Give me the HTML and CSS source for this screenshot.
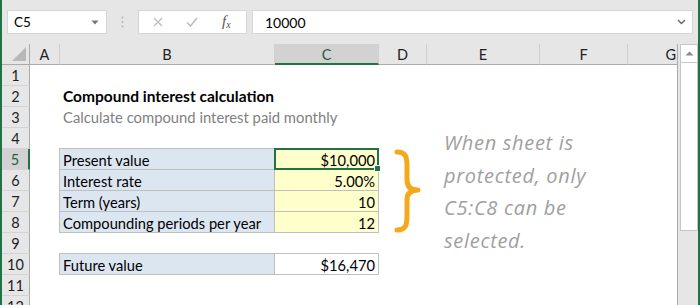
FILE: index.html
```html
<!DOCTYPE html>
<html>
<head>
<meta charset="utf-8">
<link rel="stylesheet" href="styles.css">
</head>
<body>
<div class="app">
  <div class="toolbar">
    <div class="namebox">
      <span class="nb-text">C5</span>
      <svg class="nb-arrow" width="8" height="5" viewBox="0 0 8 5"><path d="M0.5 0.5 L7.5 0.5 L4 4.5 Z" fill="#777"/></svg>
    </div>
    <div class="grip">
      <svg width="3" height="12" viewBox="0 0 3 12"><circle cx="1.5" cy="1.5" r="1" fill="#b5b5b5"/><circle cx="1.5" cy="6" r="1" fill="#b5b5b5"/><circle cx="1.5" cy="10.5" r="1" fill="#b5b5b5"/></svg>
    </div>
    <div class="fbtns">
      <svg class="ic-x" width="10" height="10" viewBox="0 0 10 10"><path d="M1 1 L9 9 M9 1 L1 9" stroke="#bdbdbd" stroke-width="1.3" fill="none"/></svg>
      <svg class="ic-check" width="12" height="10" viewBox="0 0 12 10"><path d="M1 5.5 L4.5 9 L11 1" stroke="#bdbdbd" stroke-width="1.5" fill="none"/></svg>
      <span class="ic-fx">f<sub>x</sub></span>
    </div>
    <div class="fbar">
      <span class="fb-text">10000</span>
      <svg class="fb-chev" width="9" height="6" viewBox="0 0 9 6"><path d="M1 1 L4.5 4.5 L8 1" stroke="#666" stroke-width="1.4" fill="none"/></svg>
    </div>
  </div>
  <div class="main">
    <div class="sheet">
      <div class="corner"><svg width="14" height="14" viewBox="0 0 14 14"><path d="M14 0 L14 14 L0 14 Z" fill="#b8b8b8"/></svg></div>
      <div class="ch">A</div>
      <div class="ch">B</div>
      <div class="ch sel">C</div>
      <div class="ch">D</div>
      <div class="ch">E</div>
      <div class="ch">F</div>
      <div class="ch last">G</div>

      <div class="rh r1">1</div>
      <div class="rh r2">2</div>
      <div class="rh r3">3</div>
      <div class="rh r4">4</div>
      <div class="rh r5 sel">5</div>
      <div class="rh r6">6</div>
      <div class="rh r7">7</div>
      <div class="rh r8">8</div>
      <div class="rh r9">9</div>
      <div class="rh r10">10</div>
      <div class="rh r11">11</div>
      <div class="rh r12">12</div>

      <div class="title">Compound interest calculation</div>
      <div class="subtitle">Calculate compound interest paid monthly</div>

      <div class="tbl inputs">
        <div class="lbl">Present value</div><div class="val input active">$10,000</div>
        <div class="lbl">Interest rate</div><div class="val input">5.00%</div>
        <div class="lbl">Term (years)</div><div class="val input">10</div>
        <div class="lbl">Compounding periods per year</div><div class="val input">12</div>
      </div>

      <div class="tbl result">
        <div class="lbl">Future value</div><div class="val">$16,470</div>
      </div>

      <div class="brace">
        <svg width="28" height="84" viewBox="0 0 28 84"><path d="M3 3 C12 3 13 8 13 18 L13 31 C13 38 17 41 24 41 C17 41 13 44 13 51 L13 66 C13 76 12 81 3 81" stroke="#f5a81c" stroke-width="5" fill="none" stroke-linecap="round" stroke-linejoin="round"/></svg>
      </div>

      <div class="note">When sheet is<br>protected, only<br>C5:C8 can be<br>selected.</div>
    </div>
    <div class="vscroll">
      <div class="vs-up"><svg width="9" height="5" viewBox="0 0 9 5"><path d="M0.5 4.5 L4.5 0.5 L8.5 4.5 Z" fill="#8a8a8a"/></svg></div>
      <div class="vs-thumb"></div>
    </div>
  </div>
</div>
</body>
</html>
```

FILE: styles.css
```css
* { box-sizing: border-box; }
html, body { margin: 0; padding: 0; }
body {
  width: 700px;
  height: 305px;
  overflow: hidden;
  background: #fff;
  font-family: Lato, "Liberation Sans", sans-serif;
  color: #000;
}
.app {
  width: 700px;
  height: 305px;
  border-left: 2px solid #217346;
  border-right: 2px solid #217346;
  display: flex;
  flex-direction: column;
}
.toolbar {
  height: 44px;
  background: #e6e6e6;
  display: flex;
  align-items: flex-start;
  padding: 10px 0 0 5px;
  flex: none;
}
.namebox {
  width: 100px;
  height: 24px;
  background: #fff;
  border: 1px solid #d6d6d6;
  display: flex;
  align-items: center;
  justify-content: space-between;
  padding: 0 7px 0 6px;
  font-size: 13.5px;
}
.nb-arrow { margin-top: 1px; }
.grip {
  width: 31px;
  height: 24px;
  display: flex;
  align-items: center;
  justify-content: center;
}
.fbtns {
  width: 109px;
  height: 24px;
  background: #fff;
  border: 1px solid #d6d6d6;
  display: flex;
  align-items: center;
  padding-left: 14px;
}
.ic-x { margin-right: 23px; }
.ic-check { margin-right: 24px; }
.ic-fx {
  font-family: "Liberation Serif", serif;
  font-style: italic;
  font-size: 15px;
  color: #555;
  line-height: 1;
}
.ic-fx sub { font-size: 10px; vertical-align: -2px; }
.fbar {
  margin-left: 5px;
  width: 441px;
  height: 24px;
  background: #fff;
  border: 1px solid #d6d6d6;
  display: flex;
  align-items: center;
  justify-content: space-between;
  padding: 0 6px 0 12px;
  font-size: 14px;
}
.main {
  flex: 1;
  display: flex;
  min-height: 0;
}
.sheet {
  width: 676px;
  flex: none;
  display: grid;
  grid-template-columns: 28px 30px 215px 104px 48px 113px 88px 50px;
  grid-template-rows: repeat(13, 21px);
  background: #fff;
  border-right: 1px solid #ababab;
  font-size: 14.7px;
  overflow: hidden;
}
.corner {
  background: #e6e6e6;
  border-right: 1px solid #ababab;
  border-bottom: 1px solid #ababab;
  display: flex;
  align-items: flex-end;
  justify-content: flex-end;
  padding: 0 3px 3px 0;
}
.ch {
  background: #e6e6e6;
  border-bottom: 1px solid #ababab;
  border-right: 1px solid #d0d0d0;
  display: flex;
  align-items: center;
  justify-content: center;
  font-size: 14.5px;
  color: #222;
  padding-top: 1px;
}
.ch.last { justify-content: flex-end; padding-right: 2px; border-right: none; }
.ch.sel {
  background: #d2d2d2;
  border-bottom: 2px solid #217346;
  color: #2a5e42;
}
.rh {
  grid-column: 1;
  background: #e6e6e6;
  border-right: 1px solid #ababab;
  border-bottom: 1px solid #d4d4d4;
  display: flex;
  align-items: center;
  justify-content: center;
  font-size: 14.5px;
  color: #222;
  padding-top: 1px;
}
.rh.sel {
  background: #d2d2d2;
  border-right: 2px solid #217346;
  color: #2a5e42;
}
.r1 { grid-row: 2; }
.r2 { grid-row: 3; }
.r3 { grid-row: 4; }
.r4 { grid-row: 5; }
.r5 { grid-row: 6; }
.r6 { grid-row: 7; }
.r7 { grid-row: 8; }
.r8 { grid-row: 9; }
.r9 { grid-row: 10; }
.r10 { grid-row: 11; }
.r11 { grid-row: 12; }
.r12 { grid-row: 13; }

.title {
  grid-column: 3 / 6;
  grid-row: 3;
  font-weight: 700;
  font-size: 15.5px;
  display: flex;
  align-items: flex-end;
  padding: 0 0 2px 3px;
  white-space: nowrap;
}
.subtitle {
  grid-column: 3 / 6;
  grid-row: 4;
  color: #7f7f7f;
  font-size: 14.8px;
  display: flex;
  align-items: flex-end;
  padding: 0 0 2px 3px;
  white-space: nowrap;
}
.tbl {
  grid-column: 3 / 5;
  display: grid;
  grid-template-columns: 215px 104px;
  grid-auto-rows: 21px;
  margin: -1px 0 0 -1px;
  border-top: 1px solid #bfbfbf;
  border-left: 1px solid #bfbfbf;
}
.inputs { grid-row: 6 / 10; grid-template-rows: repeat(4, 21px); }
.result { grid-row: 11; }
.tbl > div {
  border-right: 1px solid #bfbfbf;
  border-bottom: 1px solid #bfbfbf;
  display: flex;
  align-items: flex-end;
  padding-bottom: 0;
  font-size: 14.7px;
  white-space: nowrap;
}
.lbl { background: #dce6f1; padding-left: 3px; }
.val { justify-content: flex-end; padding-right: 3px; background: #fff; }
.val.input { background: #ffffcc; }
.val.active { position: relative; }
.val.active::after {
  content: "";
  position: absolute;
  left: -1px;
  top: -1px;
  right: -1px;
  bottom: -1px;
  border: 2px solid #217346;
}
.val.active::before {
  content: "";
  position: absolute;
  right: -3px;
  bottom: -3px;
  width: 5px;
  height: 5px;
  background: #217346;
  border: 1px solid #fff;
  z-index: 2;
}
.brace {
  grid-column: 5;
  grid-row: 6 / 10;
  display: flex;
  align-items: center;
  padding-left: 15px;
}
.note {
  grid-column: 6 / 9;
  grid-row: 5 / 11;
  padding: 0 0 0 17px;
  margin-top: -1px;
  font-family: "Open Sans", sans-serif;
  font-style: italic;
  font-size: 20px;
  letter-spacing: 0.7px;
  line-height: 32.5px;
  color: #a0a0a0;
  white-space: nowrap;
}
.vscroll {
  width: 20px;
  flex: none;
  background: #e6e6e6;
  display: flex;
  flex-direction: column;
  padding: 0 0 0 2px;
}
.vs-up {
  height: 19px;
  background: #fff;
  border: 1px solid #c6c6c6;
  display: flex;
  align-items: center;
  justify-content: center;
}
.vs-thumb {
  height: 168px;
  background: #fff;
  border: 1px solid #c6c6c6;
  border-top: none;
}
```
